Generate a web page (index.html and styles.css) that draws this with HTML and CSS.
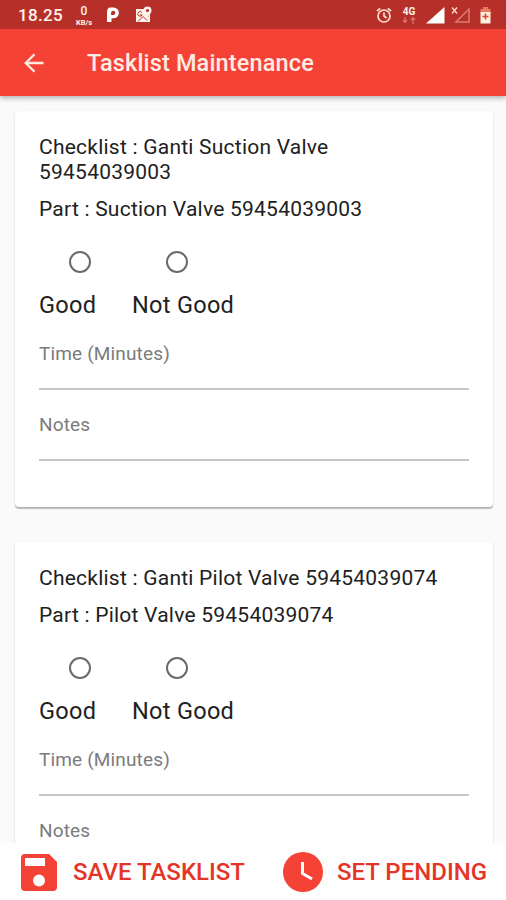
FILE: index.html
```html
<!DOCTYPE html>
<html lang="id">
<head>
<meta charset="utf-8">
<title>Tasklist Maintenance</title>
<link rel="stylesheet" href="styles.css">
</head>
<body>
<div class="screen">
  <header class="top">
    <div class="status">
      <span class="clock">18.25</span>
      <span class="speed"><b>0</b><small>KB/s</small></span>
      <svg class="p-icon" width="14" height="16" viewBox="0 0 14 16"><path fill="#fff" fill-rule="evenodd" d="M4 .5h3.500a5.300 5.300 0 0 1 0 10.800H5.500V15H1V5.500C1 2.500 2 .5 4 .5zm3.200 3.300a2.100 2.100 0 0 0-2.100 2.100v2.100h2.100a2.100 2.100 0 0 0 0-4.200z"/></svg>
      <svg class="map-icon" width="17" height="18" viewBox="0 0 17 18"><path fill="#fff3ec" d="M1 3h8c0 3 2 5 4 8l2-3v8H1z"/><path fill="#fff3ec" d="M12.5.5a4 4 0 0 0-4 4c0 3 4 6.500 4 6.500s4-3.500 4-6.500a4 4 0 0 0-4-4z"/><circle cx="12.500" cy="4.500" r="1.600" fill="#b63029"/><path d="M6.800 6.300a2.300 2.300 0 1 0 .4 2.600H5M3 15.500l5-5 4 4" fill="none" stroke="#b63029" stroke-width="1"/></svg>
      <span class="spacer"></span>
      <svg class="alarm" width="16" height="17" viewBox="0 0 16 17"><g fill="none" stroke="#ffe1d5" stroke-width="1.700"><circle cx="8" cy="9" r="6"/><path d="M8 5.500V9l2.500 2M1 4l3.200-2.700M15 4l-3.200-2.700"/></g></svg>
      <span class="net"><span>4G</span><svg width="14" height="7" viewBox="0 0 14 7"><path d="M3 0v5M1 3l2 2.500L5 3M11 7V1M9 3l2-2.500L13 3" fill="none" stroke="#d9736a" stroke-width="1.300"/></svg></span>
      <svg class="signal" width="19" height="17" viewBox="0 0 19 17"><path d="M0 16.500 18.500 0v16.500z" fill="#fff"/></svg>
      <svg class="nosignal" width="20" height="18" viewBox="0 0 20 18"><path d="M5 16 18 3v13z" fill="none" stroke="#dc7c72" stroke-width="1.500"/><path d="m1 1.500 5 6m0-6-5 6" stroke="#ffd9cf" stroke-width="1.300"/></svg>
      <svg class="battery" width="11" height="17" viewBox="0 0 11 17"><path d="M3 0h5v2h2.500v5H.5V2H3z" fill="#e87962"/><path d="M.5 5h10v11.500H.5z" fill="#fff0dd"/><path d="M5.500 6.500v6M2.500 9.500h6" stroke="#d9482f" stroke-width="1.600"/></svg>
    </div>
    <div class="appbar">
      <svg class="back" width="20" height="20" viewBox="0 0 20 20"><path d="M19.500 10H2M10.500 1.200 1.700 10l8.800 8.800" fill="none" stroke="#ffeae4" stroke-width="2.300"/></svg>
      <h1>Tasklist Maintenance</h1>
    </div>
  </header>
  <main class="list">
    <section class="card">
      <p class="line">Checklist : Ganti Suction Valve<br>59454039003</p>
      <p class="line">Part : Suction Valve 59454039003</p>
      <div class="radios"><i class="radio"></i><i class="radio"></i></div>
      <div class="labels"><span class="good">Good</span><span class="notgood">Not Good</span></div>
      <div class="field">Time (Minutes)</div>
      <div class="field">Notes</div>
    </section>
    <section class="card">
      <p class="line">Checklist : Ganti Pilot Valve 59454039074</p>
      <p class="line">Part : Pilot Valve 59454039074</p>
      <div class="radios"><i class="radio"></i><i class="radio"></i></div>
      <div class="labels"><span class="good">Good</span><span class="notgood">Not Good</span></div>
      <div class="field">Time (Minutes)</div>
      <div class="field">Notes</div>
    </section>
  </main>
  <footer class="actions">
    <svg class="save" width="36" height="37" viewBox="0 0 36 37"><path fill="#f44336" fill-rule="evenodd" d="M4 0h24l8 8v25a4 4 0 0 1-4 4H4a4 4 0 0 1-4-4V4a4 4 0 0 1 4-4zM4 4v8h20V4zm14 16.500a6 6 0 1 0 0 12 6 6 0 0 0 0-12z"/></svg>
    <span class="save-text">SAVE TASKLIST</span>
    <svg class="pending" width="40" height="40" viewBox="0 0 40 40"><circle cx="20" cy="20" r="20" fill="#f44336"/><path d="M19.500 10v11.500l9.500 5.500" fill="none" stroke="#fff" stroke-width="3"/></svg>
    <span class="pending-text">SET PENDING</span>
  </footer>
</div>
</body>
</html>
```

FILE: styles.css
```css
* { box-sizing: border-box; }
body { margin: 0; font-family: Roboto, "Liberation Sans", sans-serif; background: #fafafa; color: #212121; }
h1, p { margin: 0; }
svg { display: block; flex: none; }
.screen { width: 506px; height: 900px; display: flex; flex-direction: column; overflow: hidden; }
.top { flex: none; z-index: 1; box-shadow: 0 2px 5px rgba(0,0,0,.3); }
.status { height: 29px; background: #b63029; display: flex; align-items: center; color: #fff3ee; padding: 1px 15px 0 18px; }
.clock { width: 56px; font-size: 17px; font-weight: 500; letter-spacing: .3px; line-height: 20px; }
.speed { width: 20px; display: flex; flex-direction: column; align-items: center; }
.speed b { font-size: 12px; line-height: 14px; font-weight: 500; }
.speed small { font-size: 7.500px; line-height: 9px; font-weight: 700; }
.p-icon { margin-left: 12px; }
.map-icon { margin-left: 15px; }
.spacer { flex: 1; }
.net { width: 16px; margin-left: 9px; font-size: 10px; line-height: 9px; font-weight: 700; display: flex; flex-direction: column; align-items: center; gap: 1px; }
.signal { margin-left: 9px; }
.nosignal { margin-left: 6px; }
.battery { margin-left: 9px; }
.appbar { height: 67px; background: #f44336; display: flex; align-items: center; padding-left: 24px; }
.appbar h1 { margin-left: 43px; font-size: 23.500px; font-weight: 500; letter-spacing: .15px; color: #ffeae4; }
.list { flex: 1; min-height: 0; overflow: hidden; padding: 15px 13px 0 15px; }
.card { height: 396px; margin-bottom: 35px; padding: 24px; background: #fff; border-radius: 4px; box-shadow: 0 2px 1px rgba(0,0,0,.2), 0 1px 2px rgba(0,0,0,.15); }
.line { font-size: 21px; line-height: 25px; letter-spacing: .23px; margin-bottom: 12px; white-space: nowrap; }
.radios { display: flex; gap: 75.500px; padding: 17px 0 0 29.500px; }
.radio { width: 22px; height: 22px; border: 2px solid #6b6b6b; border-radius: 50%; }
.labels { display: flex; margin-top: 18px; font-size: 23.500px; line-height: 28px; letter-spacing: .3px; }
.good { width: 93px; }
.field { height: 57px; margin-bottom: 14px; border-bottom: 2px solid #c6c6c6; font-size: 19px; line-height: 24px; padding-top: 9px; color: #7b7b7b; letter-spacing: .15px; }
.labels + .field { margin-top: 14px; }
.actions { flex: none; height: 57px; display: flex; align-items: center; padding: 1px 0 0 21px; background: #fefefe; color: #e53529; font-size: 24px; font-weight: 500; white-space: nowrap; }
.save-text { margin-left: 16px; width: 210px; }
.pending-text { margin-left: 14px; }
```
